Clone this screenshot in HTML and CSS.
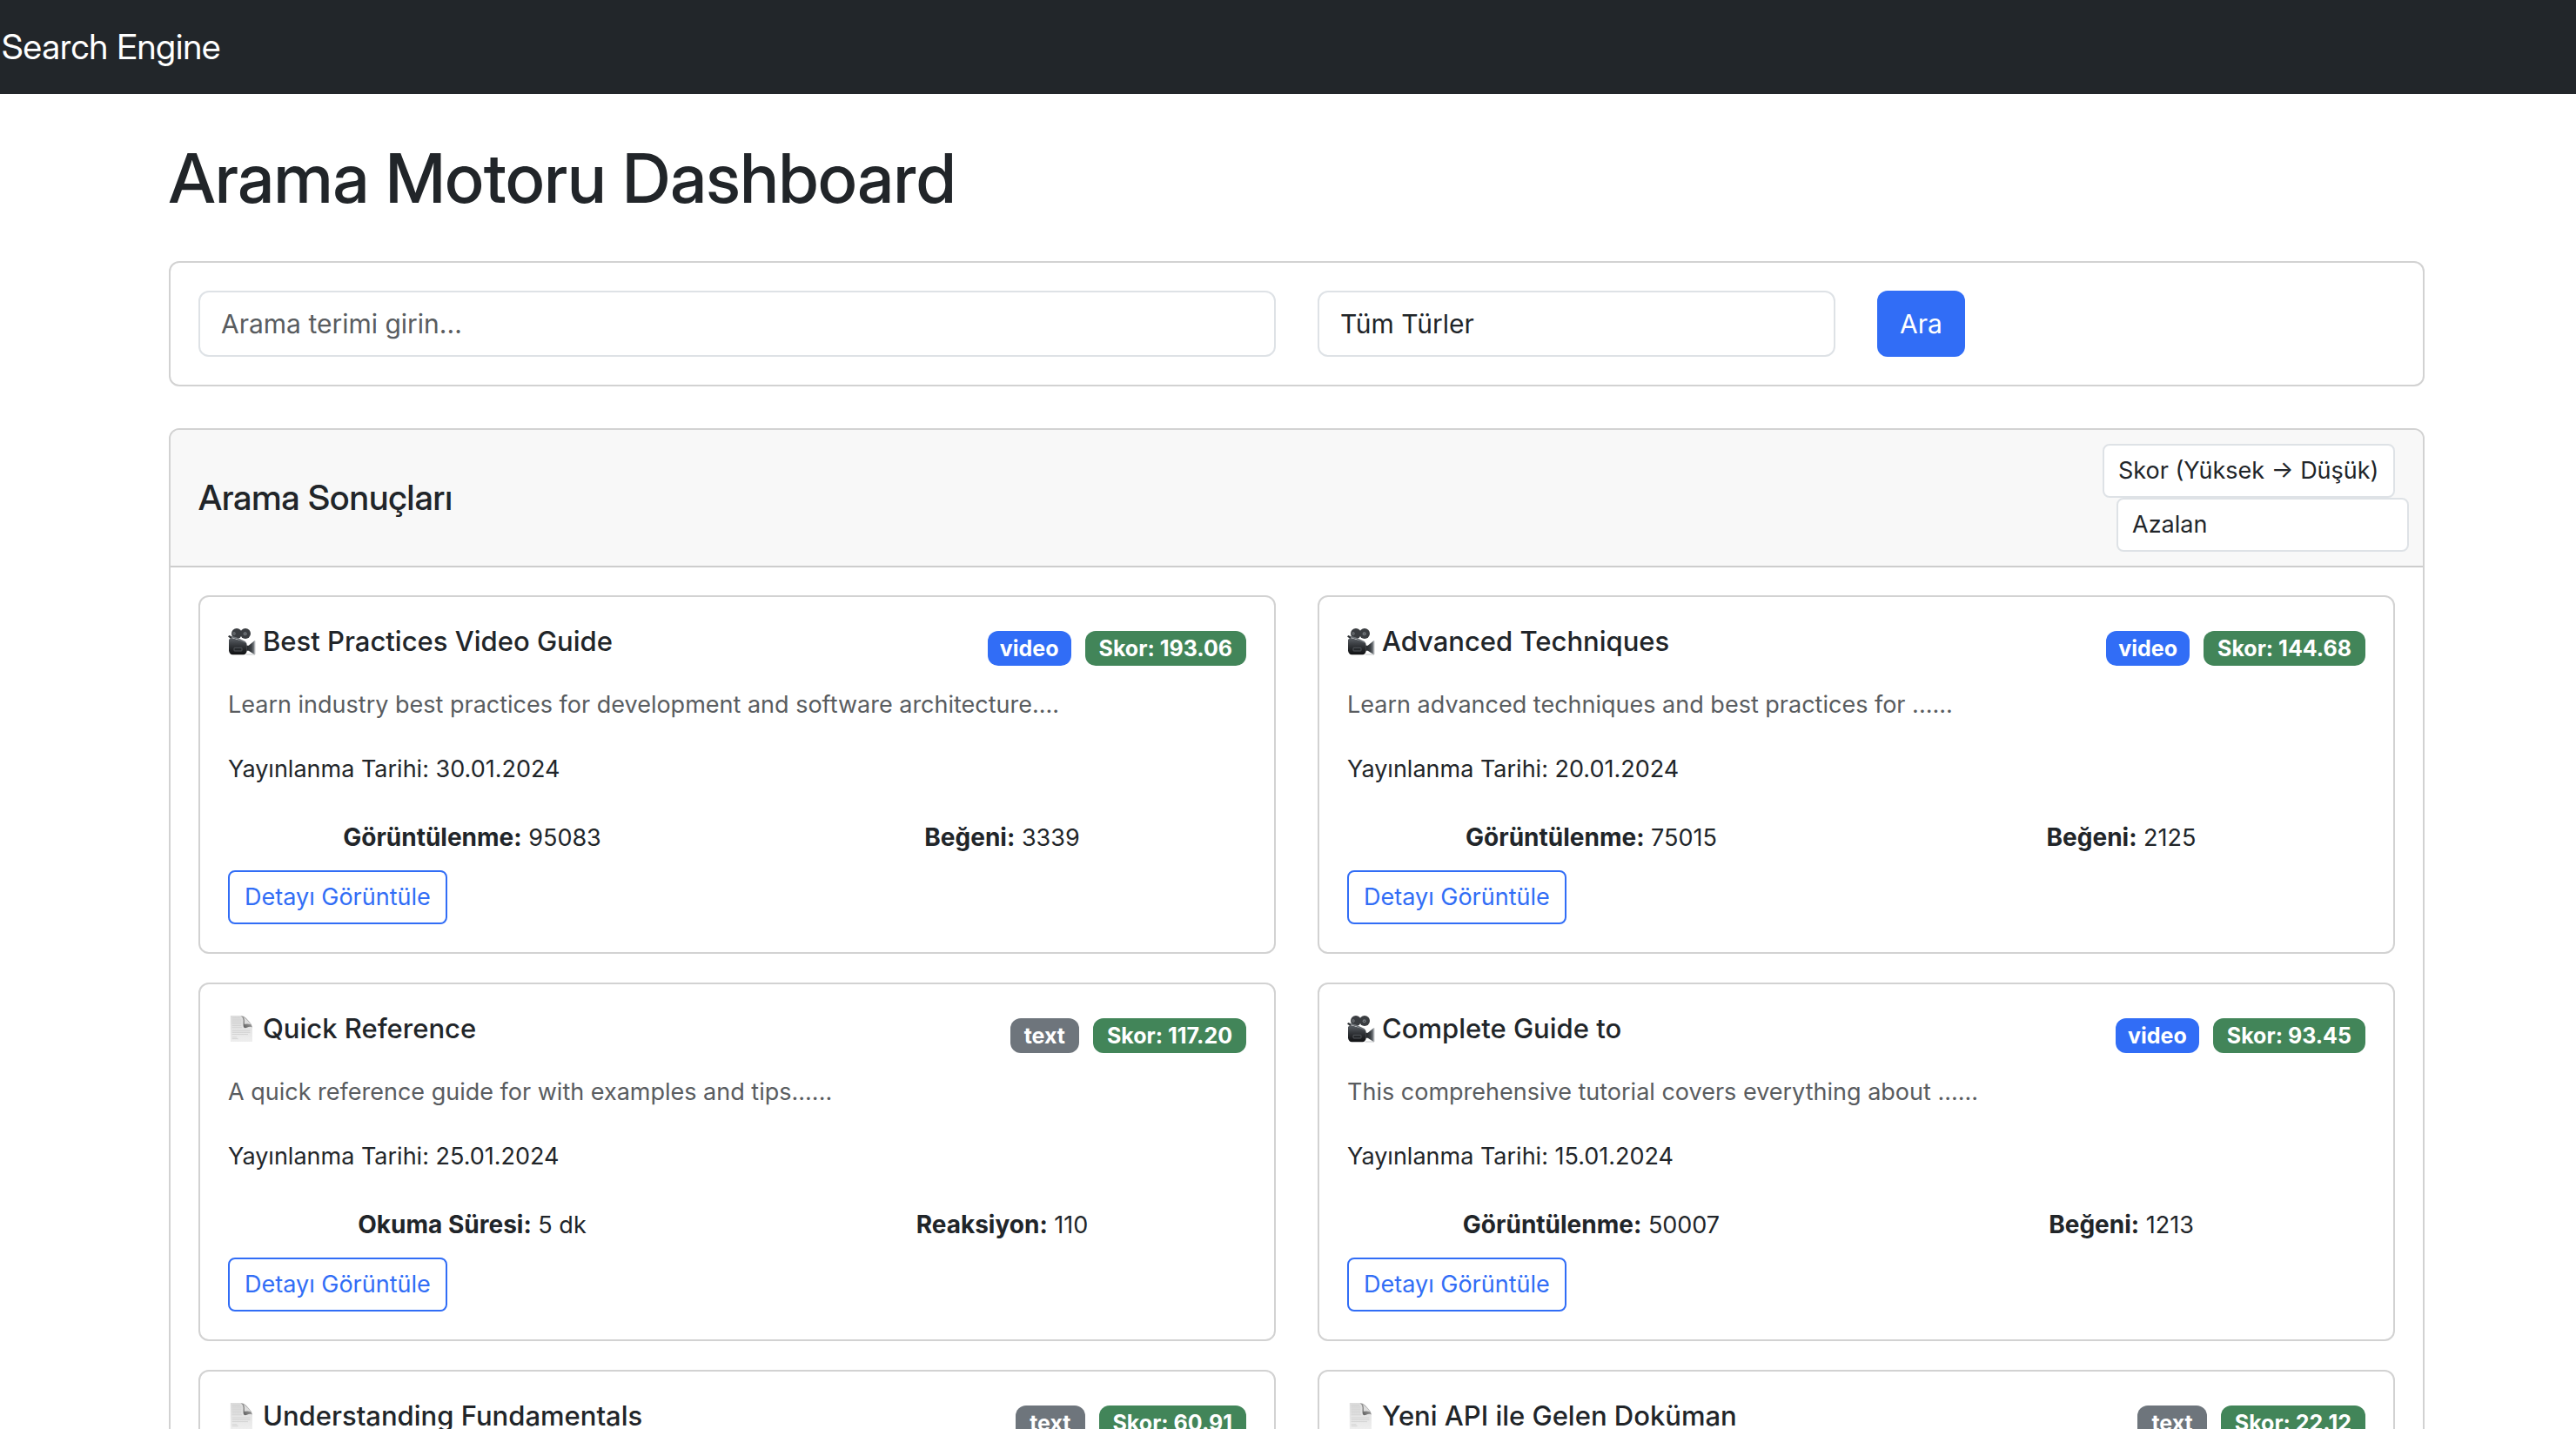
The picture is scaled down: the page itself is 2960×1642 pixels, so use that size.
FILE: index.html
```html
<!DOCTYPE html>
<html lang="tr">
<head>
<meta charset="utf-8">
<title>Search Engine</title>
<link rel="stylesheet" href="styles.css">
</head>
<body>
<svg class="sprite" aria-hidden="true">
  <defs>
    <linearGradient id="body-fill" x1="0" y1="0" x2="0" y2="1">
      <stop offset="0" stop-color="#5b6066"/>
      <stop offset="0.45" stop-color="#33363a"/>
      <stop offset="1" stop-color="#0e0f11"/>
    </linearGradient>
    <linearGradient id="lens-fill" x1="0" y1="0" x2="1" y2="0">
      <stop offset="0" stop-color="#24272a"/>
      <stop offset="0.6" stop-color="#3c4044"/>
      <stop offset="1" stop-color="#8b9095"/>
    </linearGradient>
    <linearGradient id="page-fill" x1="0" y1="0" x2="0" y2="1">
      <stop offset="0" stop-color="#dcdcdc"/>
      <stop offset="1" stop-color="#eeeeee"/>
    </linearGradient>
    <linearGradient id="fold-fill" x1="0" y1="1" x2="1" y2="0">
      <stop offset="0" stop-color="#4e4e4e"/>
      <stop offset="0.5" stop-color="#8c8c8c"/>
      <stop offset="1" stop-color="#e4e4e4"/>
    </linearGradient>
    <symbol id="icon-video" viewBox="38 62 96 96">
      <circle cx="68" cy="83" r="18" fill="#3a3d41"/>
      <circle cx="98" cy="83" r="18" fill="#3a3d41"/>
      <path d="M41 104Q44 98 54 99L98 112Q103 115 103 122V143Q101 155 91 156H54Q43 154 41 142Z" fill="url(#body-fill)"/>
      <path d="M102 124H109L130 107V156L109 142H102Z" fill="url(#lens-fill)"/>
      <path d="M100 155H131V108" fill="none" stroke="#a9adb1" stroke-width="2"/>
      <path d="M42 92L66 98L98 113" fill="none" stroke="#6c7176" stroke-width="5"/>
      <path d="M40 91L50 99" fill="none" stroke="#2b2e31" stroke-width="6"/>
      <circle cx="59" cy="83" r="5" fill="#7c8186"/>
      <circle cx="97" cy="84" r="6" fill="#74797e"/>
      <circle cx="59" cy="83" r="2" fill="#2b2e31"/>
      <circle cx="97" cy="84" r="2" fill="#2b2e31"/>
      <rect x="59" y="132" width="27" height="11" rx="2" fill="#25282b" stroke="#6a6e72" stroke-width="2"/>
    </symbol>
    <symbol id="icon-text" viewBox="38 42 96 102">
      <path d="M44 45H82Q94 45 104 56L118 73Q124 80 124 88V141H44Z" fill="url(#page-fill)"/>
      <path d="M82 46Q90 50 91 62V80Q92 94 104 89Q116 84 124 88Q122 78 112 67L101 55Q93 46 82 46Z" fill="url(#fold-fill)"/>
      <path d="M93 51Q108 63 119 77Q110 74 95 76Q97 62 93 51Z" fill="#dddddd"/>
      <path d="M50 54H80M50 61H84M50 68H84M50 75H84M50 82H84M50 89H86M50 100H116M50 107H116M50 114H108M50 124H68M50 130H72" stroke="#c6c6c6" stroke-width="2"/>
    </symbol>
  </defs>
</svg>

<nav class="navbar"><a class="brand" href="#">Search Engine</a></nav>

<div class="page">
  <main class="container">
    <h1 class="page-title">Arama Motoru Dashboard</h1>

    <form class="panel search-form">
      <input class="field search-term" type="text" placeholder="Arama terimi girin..." aria-label="Arama terimi">
      <select class="field" aria-label="İçerik türü"><option>Tüm Türler</option></select>
      <button class="btn-primary" type="submit">Ara</button>
    </form>

    <section class="panel">
      <header class="panel-header">
        <h2 class="panel-title">Arama Sonuçları</h2>
        <div class="sorting">
          <select class="field field-small sort-by" aria-label="Sıralama"><option>Skor (Yüksek → Düşük)</option></select>
          <select class="field field-small sort-order" aria-label="Sıralama yönü"><option>Azalan</option></select>
        </div>
      </header>

      <div class="results">
        <article class="panel result">
          <div class="result-head">
            <h3 class="result-title"><svg class="icon"><use href="#icon-video"/></svg>Best Practices Video Guide</h3>
            <div class="badges"><span class="badge video">video</span><span class="badge score">Skor: 193.06</span></div>
          </div>
          <p class="description">Learn industry best practices for development and software architecture....</p>
          <p class="date">Yayınlanma Tarihi: 30.01.2024</p>
          <div class="stats"><span><strong>Görüntülenme:</strong> 95083</span><span><strong>Beğeni:</strong> 3339</span></div>
          <a class="btn-outline" href="#">Detayı Görüntüle</a>
        </article>

        <article class="panel result">
          <div class="result-head">
            <h3 class="result-title"><svg class="icon"><use href="#icon-video"/></svg>Advanced Techniques</h3>
            <div class="badges"><span class="badge video">video</span><span class="badge score">Skor: 144.68</span></div>
          </div>
          <p class="description">Learn advanced techniques and best practices for ......</p>
          <p class="date">Yayınlanma Tarihi: 20.01.2024</p>
          <div class="stats"><span><strong>Görüntülenme:</strong> 75015</span><span><strong>Beğeni:</strong> 2125</span></div>
          <a class="btn-outline" href="#">Detayı Görüntüle</a>
        </article>

        <article class="panel result">
          <div class="result-head">
            <h3 class="result-title"><svg class="icon"><use href="#icon-text"/></svg>Quick Reference</h3>
            <div class="badges"><span class="badge text">text</span><span class="badge score">Skor: 117.20</span></div>
          </div>
          <p class="description">A quick reference guide for with examples and tips......</p>
          <p class="date">Yayınlanma Tarihi: 25.01.2024</p>
          <div class="stats"><span><strong>Okuma Süresi:</strong> 5 dk</span><span><strong>Reaksiyon:</strong> 110</span></div>
          <a class="btn-outline" href="#">Detayı Görüntüle</a>
        </article>

        <article class="panel result">
          <div class="result-head">
            <h3 class="result-title"><svg class="icon"><use href="#icon-video"/></svg>Complete Guide to</h3>
            <div class="badges"><span class="badge video">video</span><span class="badge score">Skor: 93.45</span></div>
          </div>
          <p class="description">This comprehensive tutorial covers everything about ......</p>
          <p class="date">Yayınlanma Tarihi: 15.01.2024</p>
          <div class="stats"><span><strong>Görüntülenme:</strong> 50007</span><span><strong>Beğeni:</strong> 1213</span></div>
          <a class="btn-outline" href="#">Detayı Görüntüle</a>
        </article>

        <article class="panel result">
          <div class="result-head">
            <h3 class="result-title"><svg class="icon"><use href="#icon-text"/></svg>Understanding Fundamentals</h3>
            <div class="badges"><span class="badge text">text</span><span class="badge score">Skor: 60.91</span></div>
          </div>
        </article>

        <article class="panel result">
          <div class="result-head">
            <h3 class="result-title"><svg class="icon"><use href="#icon-text"/></svg>Yeni API ile Gelen Doküman</h3>
            <div class="badges"><span class="badge text">text</span><span class="badge score">Skor: 22.12</span></div>
          </div>
        </article>
      </div>
    </section>
  </main>
</div>
</body>
</html>
```
FILE: styles.css
```css
*, *::before, *::after { box-sizing: border-box; }

body {
  margin: 0;
  height: 100vh;
  overflow: hidden;
  background: #fff;
  color: #212529;
  font-family: "Inter", "Liberation Sans", sans-serif;
  font-size: 27px;
  line-height: 42px;
}

h1, h2, h3, p { margin: 0; font-weight: 500; }
p { font-weight: 400; }
.sprite { display: block; width: 0; height: 0; }

.brand, .page-title, .panel-title {
  font-family: "Inter Display", "Inter", "Liberation Sans", sans-serif;
}

.navbar { padding: 24px 2px; background: #22262a; }
.brand {
  display: block;
  color: #fff;
  font-size: 40px;
  line-height: 60px;
  text-decoration: none;
}

.page { padding-left: 20px; }
.container {
  max-width: 2640px;
  margin: 0 auto;
  padding: 48px 24px;
}
.page-title { margin-bottom: 48px; font-size: 79px; line-height: 96px; }

.panel {
  border: 2px solid #d2d2d2;
  border-radius: 12px;
  background: #fff;
}

.search-form {
  display: grid;
  grid-template-columns: repeat(4, 1fr);
  column-gap: 48px;
  margin-bottom: 48px;
  padding: 32px;
}
.search-term { grid-column: span 2; }

.field {
  appearance: none;
  min-width: 0;
  height: 76px;
  padding: 0 24px;
  border: 2px solid #dee2e6;
  border-radius: 12px;
  background: #fff;
  color: #212529;
  font: inherit;
  font-size: 30px;
}
.field::placeholder { color: #595c5f; opacity: 1; }
.field-small {
  height: 62px;
  padding: 0 16px;
  border-radius: 8px;
  font-size: 27px;
}

.btn-primary {
  justify-self: start;
  padding: 0 26px;
  border: 0;
  border-radius: 12px;
  background: #316df6;
  color: #fff;
  font: inherit;
  font-size: 30px;
}

.panel-header {
  display: flex;
  align-items: center;
  justify-content: space-between;
  padding: 16px 16px 16px 32px;
  border-bottom: 2px solid #cdcdcd;
  border-radius: 10px 10px 0 0;
  background: #f8f8f8;
}
.panel-title { font-size: 40px; line-height: 48px; }
.sorting { display: grid; }
.sort-by { margin-right: 16px; }
.sort-order { margin-left: 16px; }

.results {
  display: grid;
  grid-template-columns: 1fr 1fr;
  gap: 33px 48px;
  padding: 32px;
}
.result { padding: 32px; }
.result-head {
  display: flex;
  justify-content: space-between;
  align-items: flex-start;
  height: 48px;
  margin-bottom: 23px;
}
.result-title {
  display: flex;
  align-items: center;
  gap: 8px;
  font-size: 31px;
  line-height: 38px;
}
.icon { width: 32px; height: 32px; }
.badges { display: flex; gap: 16px; padding-top: 7px; }
.badge {
  padding: 0 16px;
  border-radius: 12px;
  color: #fff;
  font-size: 25px;
  font-weight: 700;
  line-height: 40px;
}
.badge.video { padding: 0 14px; background: #316df6; }
.badge.text { background: #6e757c; }
.badge.score { background: #428559; }

.description { margin-bottom: 32px; color: #595c5f; }
.date { margin-bottom: 37px; }
.stats {
  display: grid;
  grid-template-columns: 1fr 1fr;
  margin: 0 -24px 16px;
  text-align: center;
}
strong { font-size: 28px; line-height: 1; }

.btn-outline {
  display: block;
  width: fit-content;
  padding: 8px 17px;
  border: 2px solid #316df6;
  border-radius: 8px;
  color: #316df6;
  text-decoration: none;
}
```
